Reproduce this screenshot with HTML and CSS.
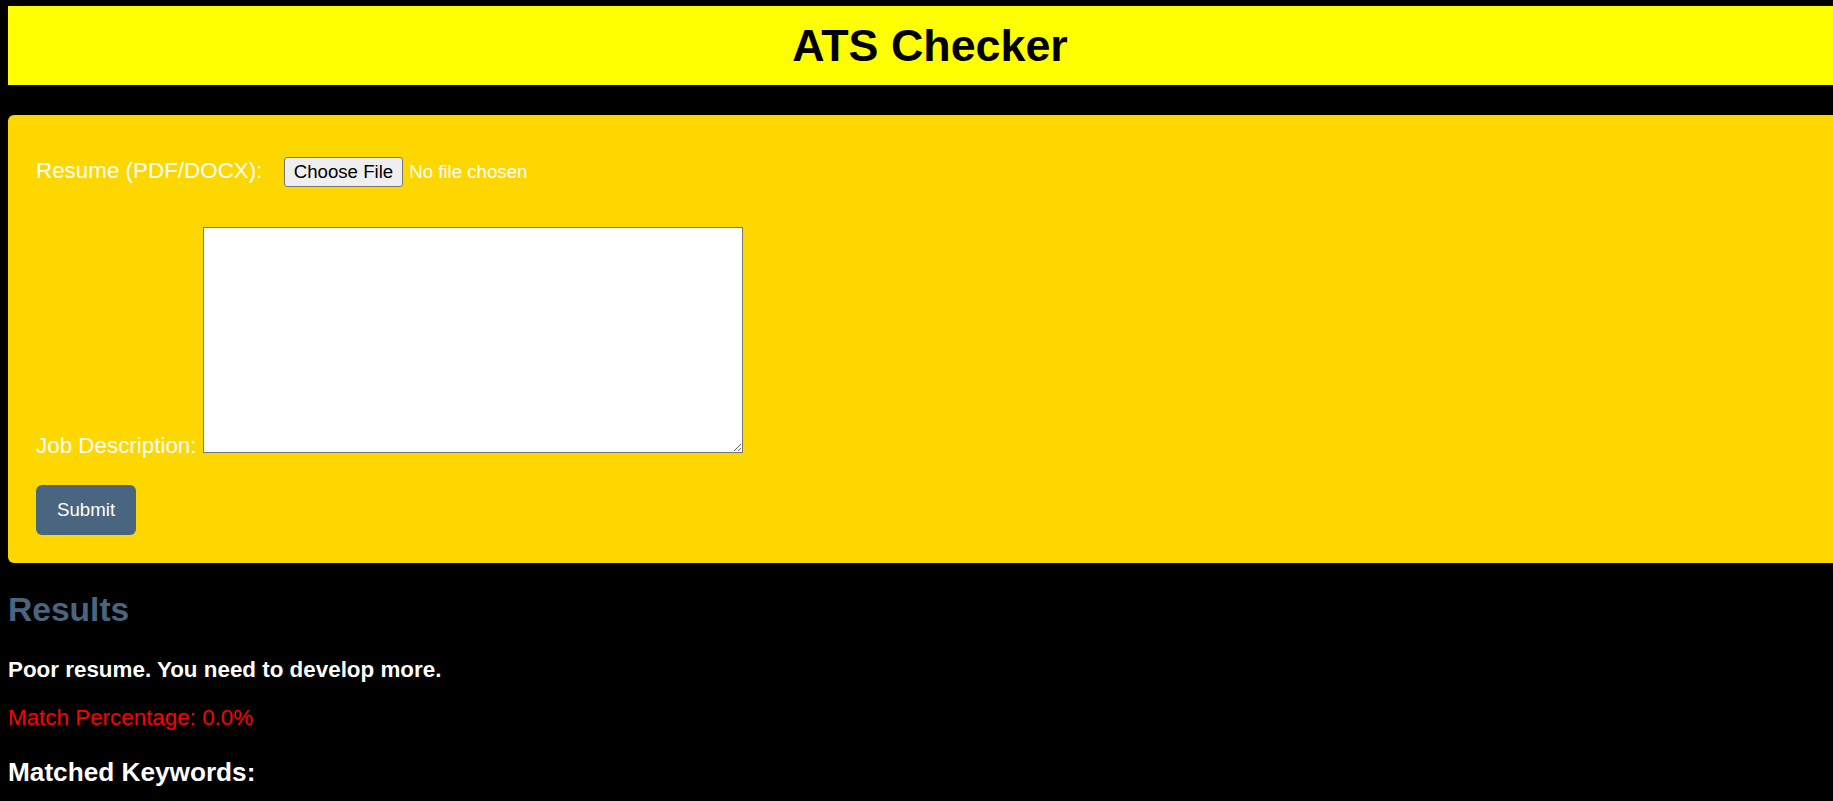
FILE: index.html
```
<!DOCTYPE html>
<html lang="en">
<head>
<meta charset="utf-8">
<title>ATS Checker</title>
<link rel="stylesheet" href="styles.css">
</head>
<body>
<header class="site-header">
  <h1 class="site-title">ATS Checker</h1>
</header>
<form class="upload-card">
  <div class="field field-resume">
    <label class="field-label resume-label" for="resume">Resume (PDF/DOCX):</label> <input class="file-input" type="file" id="resume">
  </div>
  <div class="field field-job">
    <label class="field-label" for="jd">Job Description:</label> <textarea class="job-text" id="jd"></textarea>
  </div>
  <div class="actions">
    <button class="submit-btn" type="button">Submit</button>
  </div>
</form>
<section class="results">
  <h2 class="results-title">Results</h2>
  <p class="verdict">Poor resume. You need to develop more.</p>
  <p class="match">Match Percentage: 0.0%</p>
  <h3 class="keywords-title">Matched Keywords:</h3>
</section>
</body>
</html>
```
FILE: styles.css
```
html {
  overflow: hidden;
  background: #000;
}
body {
  margin: 6px 0 8px 8px;
  background: #000;
  color: #fff;
  font-family: "Liberation Sans", Arial, sans-serif;
  font-size: 22.4px;
}
.site-header {
  padding: 14px;
  margin-right: -19px;
  margin-bottom: 30px;
  background: #ffff00;
}
.site-title {
  margin: 0;
  font-size: 44.8px;
  font-weight: bold;
  text-align: center;
  color: #000;
}
.upload-card {
  padding: 28px;
  margin-right: -20px;
  background: #ffd700;
  border-radius: 6px;
}
.field {
  margin: 0;
}
.field-resume {
  margin-top: 14px;
}
.field-job {
  margin-top: 40px;
}
.field-label {
  color: #fff;
}
.resume-label {
  margin-right: 15px;
}
.file-input {
  color: #fff;
  font-family: "Liberation Sans", Arial, sans-serif;
  font-size: 18.67px;
  margin: 0;
}
.file-input::file-selector-button {
  font: inherit;
  color: #000;
  background: #efefef;
  border: 1px solid #767676;
  border-radius: 3px;
  padding: 3px 9px;
  margin-right: 6px;
}
.job-text {
  width: 540px;
  height: 226px;
  box-sizing: border-box;
  margin: 0;
  border: 1px solid #767676;
  background: #fff;
  vertical-align: baseline;
}
.actions {
  margin-top: 26px;
}
.submit-btn {
  display: block;
  margin: 0;
  padding: 14px 21px;
  border: none;
  border-radius: 6px;
  background: #4a6580;
  color: #fff;
  font-family: "Liberation Sans", Arial, sans-serif;
  font-size: 18.67px;
}
.results-title {
  font-size: 33.6px;
  color: #4a6580;
  margin: 27.9px 0;
}
.verdict {
  font-weight: bold;
  margin: 22.4px 0;
}
.match {
  color: #ff0000;
  margin: 22.4px 0;
}
.keywords-title {
  font-size: 26.2px;
  margin: 26.2px 0;
}
```
